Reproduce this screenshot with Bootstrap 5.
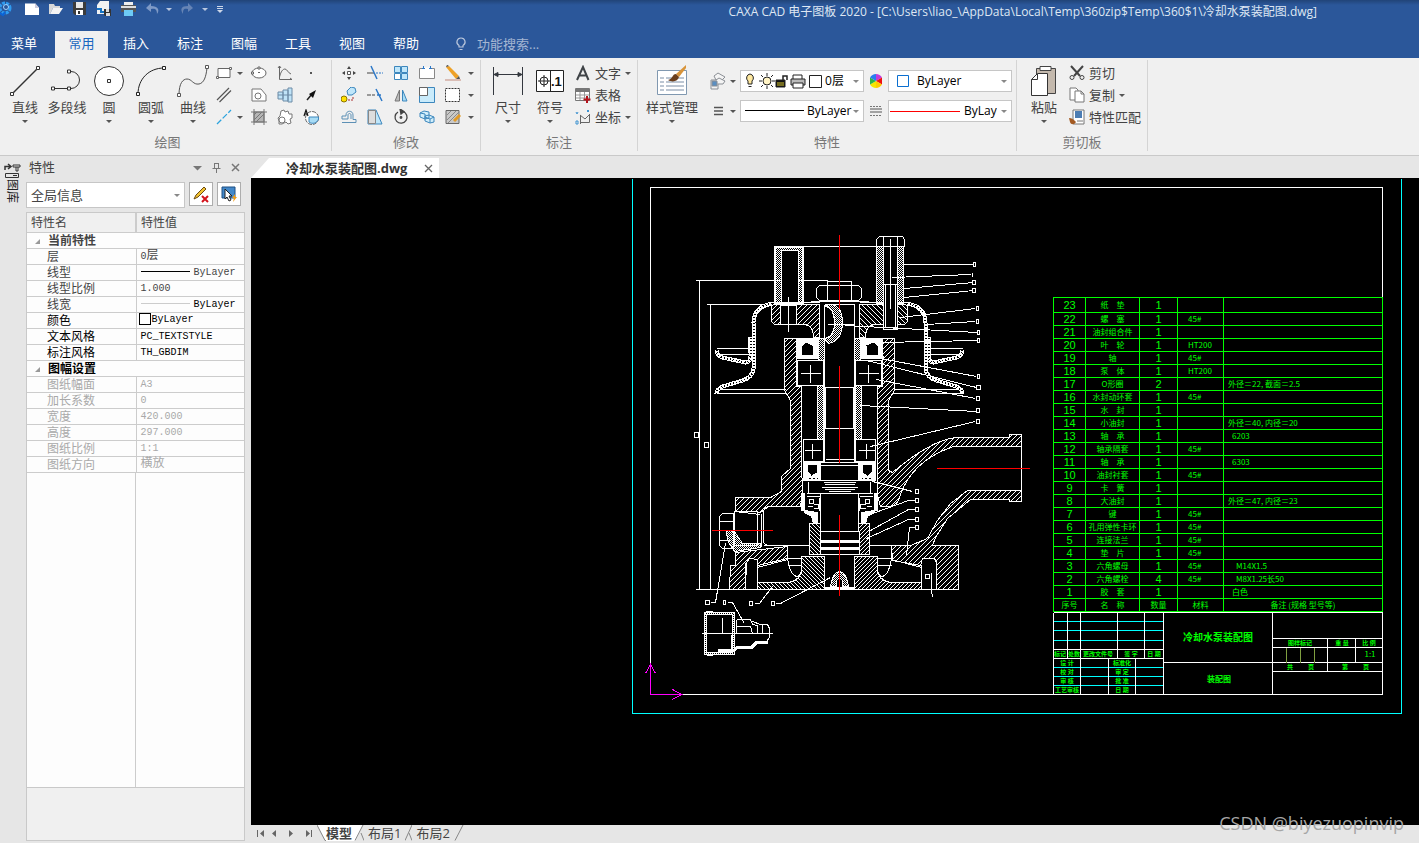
<!DOCTYPE html>
<html lang="zh-CN">
<head>
<meta charset="utf-8">
<meta name="viewport" content="width=device-width, initial-scale=1">
<title>CAXA CAD 电子图板 2020</title>
<link href="https://cdn.jsdelivr.net/npm/bootstrap@5.3.0/dist/css/bootstrap.min.css" rel="stylesheet">
<style>
:root{--blue:#2b579a;--face:#f0f0f0;--frame:#e6e6e6;--ink:#444}
body{font:13px/16px "Open Sans","Noto Sans CJK SC",sans-serif;color:var(--ink);background:var(--frame);overflow:hidden}
button,select,input{font:inherit;color:inherit}
button{border:0;background:none;padding:0}
svg{display:block;flex:none}
.arr{display:block;border:3px solid transparent;border-top-color:#555;border-bottom:0;width:6px;height:3px;flex:none}
/* title bar and menu */
.titlebar{background:linear-gradient(#214478,var(--blue) 5px);height:30px;color:#dfe7f3;font-size:12px}
.qat{height:18px}
.qat .arr{border-top-color:#b9c7df}
.caption{margin-right:102px}
.menubar{background:var(--blue);color:#fff;height:28px}
.menubar .nav-link{width:54px;height:27px;padding:0;line-height:24px;color:#fff;text-align:center;font-size:13px}
.menubar .nav-link.first{width:55px;padding-right:7px}
.menubar .nav-link.active{background:var(--face);color:#1a66c0;border-radius:0;height:27px;width:53px;margin-right:1px}
.finder{background:none;border:0;color:#fff;width:120px;padding:0;outline:0}
.finder::placeholder{color:#a5b6d3;opacity:1}
/* ribbon */
.ribbon{background:var(--face);border-bottom:1px solid #c9c9c9;padding:2px 0 4px;height:98px}
.rgroup{border-right:1px solid #d4d4d4;padding-top:2px}
.rgroup.wide{padding-left:6px;padding-right:6px}
.rgroup h2{font-size:13px;line-height:16px;margin:0;text-align:center;color:#777;font-weight:400}
.rbody{height:72px}
.big{width:42px;padding-top:3px;display:flex;flex-direction:column;align-items:center;gap:2px;white-space:nowrap}
.big.style-mgr{width:60px}
.big .arr{margin-top:3px}
.tools{display:grid;grid-auto-rows:22px;place-items:center;align-content:start}
.tools.draw{grid-template-columns:20px 12px 26px 26px 26px;margin-right:7px}
.tools.edit{grid-template-columns:repeat(5,26px) 10px}
.line-btn{height:22px;display:flex;align-items:center;gap:4px;white-space:nowrap}
.combo{display:flex;align-items:center;background:#fff;border:1px solid #c6c6c6;height:22px;width:124px;color:#000;font-size:12px;padding:0 4px;overflow:hidden}
.combo .arr{border-top-color:#888}
.combo select{appearance:none;border:0;background:none;padding:0;margin:0;min-width:0;outline:0}
.proprow{display:flex;align-items:center;gap:4px}
.mid-icon{width:24px;display:grid;place-items:center;margin:0 -4px}
/* panel */
.strip{width:26px;padding:6px 0 0 4px}
.strip span{writing-mode:vertical-rl;text-orientation:sideways;font-size:12px;line-height:16px;color:#222}
.panel{width:219px}
.panel-head{height:26px;padding:0 5px 4px 3px}
.panel .combo{width:159px;height:26px;font-size:13px;color:#444}
.tool-btn{width:24px;height:24px;background:#fff;border:1px solid #adadad;display:grid;place-items:center}
.sheet-grid{background:#fdfdfd;border:1px solid #c9c9c9}
.props{width:100%;table-layout:fixed;border-collapse:collapse;font:12px/15px "Noto Sans CJK SC",sans-serif;color:#444}
.props td,.props th{height:16px;padding:0 0 0 4px;border-bottom:1px solid #ccc;white-space:nowrap;font-weight:400;line-height:14px}
.props thead th{height:19px;background:var(--face);border-right:2px solid #ccc}
.props thead th:last-child{border-right:0}
.props td:first-child{padding-left:20px;width:109px;border-right:1px solid #ccc}
.props td+td{font-family:"Liberation Mono","Noto Sans CJK SC",monospace;font-size:12px;line-height:12px}
.props td+td i{font-style:normal;font-size:10px}
.props .head th{font-weight:700;text-align:left;padding-left:8px}
.props .dark td,.props .dark th{color:#000}
.props .off td{color:#a9a9a9}
.rule{display:inline-block;width:49px;height:1px;background:#000;vertical-align:middle;margin:0 4px 0 0}
.rule.pale{background:#ccc}
.swatch{display:inline-block;width:12px;height:12px;border:1px solid #000;background:#fff;vertical-align:middle;margin:0 1px 0 -2px}
.col-line{width:109px;border-right:1px solid #ccc}
.note-box{height:53px;background:var(--face);border:1px solid #c9c9c9;border-top:0;margin-bottom:2px}
/* document */
.doc{min-width:0;margin-left:6px}
.doc-tab{clip-path:polygon(0 100%,18px 0,100% 0,100% 100%);background:#fff;width:188px;height:20px;padding:0 6px 0 35px;font-weight:700;font-size:13px;color:#333}
.canvas{background:#000;overflow:hidden}
.drawing{position:relative;width:1168px}
.bom{position:absolute;left:802px;top:119px;width:330px;table-layout:fixed;border-collapse:collapse;border:1px solid #fff;color:#0f0;font:8px/11px "Noto Sans CJK SC",sans-serif}
.bom td,.bom th{height:13px;padding:0 0 1px 4px;border:1px solid #0f0;font-weight:400;white-space:nowrap;line-height:11px}
.bom tbody tr>:first-child,.bom tbody tr>:nth-child(3){font:11px/11px "Liberation Sans",sans-serif;text-align:center;padding:0}
.bom tr>:nth-child(2){text-align:center;padding:0 0 1px}
.bom tbody tr>:nth-child(4){padding-left:10px}
.bom tfoot tr>*{text-align:center;padding:0 0 1px}
.foot{height:18px;background:var(--frame)}
.layout-tab{height:16px;padding:0 4px;line-height:14px}
.wm{position:absolute;right:15px;bottom:9px;font:18px/22px "Open Sans",sans-serif;color:#a6a6a6;white-space:nowrap}
</style>
</head>
<body class="vh-100 d-flex flex-column position-relative">

<header class="titlebar d-flex align-items-start">
  <div class="qat d-flex align-items-center">
    <svg width="24" height="18" viewBox="0 0 24 18"><circle cx="5" cy="8" r="5" fill="none" stroke="#2f9bf0" stroke-width="3" stroke-dasharray="3 1"/><circle cx="6" cy="7" r="2.5" fill="none" stroke="#9fd4ff"/><path d="M0 13l3 2 2-3" stroke="#0b63d6" stroke-width="2" fill="none"/></svg>
    <svg width="24" height="18" viewBox="0 0 24 18"><path d="M1 3.500h10l4 4v7.500H1z" fill="#fff"/><path d="M11 3v5h4" fill="#ccd" /></svg>
    <svg width="24" height="18" viewBox="0 0 24 18"><path d="M1 4h5l1 2h5v2H5l-3 6H1z" fill="#d8d8d8"/><path d="M5 8h10l-4 6H2z" fill="#f4f4f4"/></svg>
    <svg width="24" height="18" viewBox="0 0 24 18"><path d="M1 2h13v13H3l-2-2z" fill="#3c3c3c"/><path d="M4 2h7v6H4z" fill="#e8e8e8"/><path d="M4 10h7v5H4z" fill="#fff"/><path d="M6 11h2v3H6z" fill="#333"/></svg>
    <svg width="24" height="18" viewBox="0 0 24 18"><path d="M4 1h9v13H1V5z" fill="#f2f2f2"/><path d="M1 9h4v3h3" stroke="#1674c4" stroke-width="2" fill="none"/><path d="M8 9h7v7H9l-1-1z" fill="#333"/><path d="M10 9h3v3h-3zM10 13h4v3h-4z" fill="#ddd"/></svg>
    <svg width="24" height="18" viewBox="0 0 24 18"><path d="M4 2h9v4H4z" fill="#eee"/><path d="M1 5h15v7H1z" fill="#555"/><path d="M1 6h15v2H1z" fill="#ddd"/><path d="M4 10h9v6H4z" fill="#6ecbf5"/></svg>
    <svg width="18" height="18" viewBox="0 0 18 18"><path d="M7 3L2 8l5 4V9c4-1 6 0 6 5 3-4 1-8-6-8z" fill="#7f9ac6"/></svg><span class="arr ms-1"></span>
    <svg class="ms-2" width="18" height="18" viewBox="0 0 18 18"><path d="M8 3l5 5-5 4V9C4 8 3 9 3 14c-3-5-2-8 5-8z" fill="#6684b5"/></svg><span class="arr ms-1"></span>
    <svg class="ms-2" width="8" height="18" viewBox="0 0 8 18"><path d="M1 6.500h6M1 8.500h6" stroke="#cdd7e8"/><path d="M1 10h6l-3 3z" fill="#cdd7e8"/></svg>
  </div>
  <div class="caption ms-auto pt-1">CAXA CAD 电子图板 2020 - [C:\Users\liao_\AppData\Local\Temp\360zip$Temp\360$1\冷却水泵装配图.dwg]</div>
</header>

<nav class="menubar nav flex-nowrap align-items-end">
  <a class="nav-link first" href="#">菜单</a><a class="nav-link active" href="#">常用</a><a class="nav-link" href="#">插入</a><a class="nav-link" href="#">标注</a><a class="nav-link" href="#">图幅</a><a class="nav-link" href="#">工具</a><a class="nav-link" href="#">视图</a><a class="nav-link" href="#">帮助</a>
  <label class="d-flex align-items-center h-100 ps-3" for="finder"><svg class="ms-1 me-2" width="16" height="16" viewBox="0 0 16 16"><path d="M8 2a4 4 0 0 0-2 7.500V11h4V9.500A4 4 0 0 0 8 2zM6.500 13.500h3" fill="none" stroke="#b9c6dc" stroke-width="1.200"/></svg></label>
  <input class="finder align-self-center" id="finder" type="text" placeholder="功能搜索..." aria-label="功能搜索">
</nav>

<section class="ribbon d-flex">
  <div class="rgroup ps-1">
    <div class="rbody d-flex">
      <button class="big"><svg width="32" height="32" viewBox="0 0 32 32" fill="none" stroke="#333"><path d="M3 29L29 3" stroke-width="1.500"/><path d="M1.500 27.500h3v3h-3zM27.500 1.500h3v3h-3z" fill="#fff"/></svg>直线<span class="arr"></span></button>
      <button class="big"><svg width="32" height="32" viewBox="0 0 32 32" fill="none" stroke="#333"><path d="M3 23.500h17a8 8 0 0 0 0-17h-1"/><path d="M.5 22h3v3h-3zM16.500 22h3v3h-3zM16.500 5h3v3h-3z" fill="#fff"/></svg>多段线</button>
      <button class="big"><svg width="32" height="32" viewBox="0 0 32 32" fill="#fff" stroke="#333"><circle cx="16" cy="16" r="14.500"/><path d="M14.500 14.500h3v3h-3z"/></svg>圆<span class="arr"></span></button>
      <button class="big"><svg width="32" height="32" viewBox="0 0 32 32" fill="none" stroke="#222"><path d="M3 29C3 14 14 3 29 3"/><path d="M1.500 27.500h3v3h-3zM27.500 1.500h3v3h-3z" fill="#fff"/></svg>圆弧<span class="arr"></span></button>
      <button class="big"><svg width="32" height="32" viewBox="0 0 32 32" fill="none" stroke="#555"><path d="M2 30C2 18 6 14 10 14c5 0 6 6 12 5 5-1 7-7 8-16"/><path d="M.5 28.500h3v3h-3zM28.500.5h3v3h-3z" fill="#fff"/></svg>曲线<span class="arr"></span></button>
      <div class="tools draw">
        <svg width="16" height="16" viewBox="0 0 16 16" fill="#fff" stroke="#666"><path d="M2 3.500h12v9H2z"/><path d="M.5 11.500h2v2h-2zM13.500 2.500h2v2h-2z"/></svg><span class="arr"></span>
        <svg width="16" height="16" viewBox="0 0 16 16" fill="#fff" stroke="#666"><ellipse cx="8" cy="8" rx="7" ry="5"/><path d="M.5 7h2v2h-2zM7 2h2v2H7zM7 7.500h2"/></svg>
        <svg width="16" height="16" viewBox="0 0 16 16" fill="none" stroke="#666"><path d="M2.500 1v13.500H15M2.500 12C4 6 6 4 8 4s3 4 6 5M1 3l1.500-2L4 3M13 13l2 1.500"/></svg>
        <svg width="16" height="16" viewBox="0 0 16 16"><path d="M7 7h2v2H7z" fill="#555"/></svg>
        <svg width="16" height="16" viewBox="0 0 16 16" stroke="#555" stroke-width="1.200"><path d="M1 13L13 1M3.500 15L15 3.500"/></svg><span></span>
        <svg width="16" height="16" viewBox="0 0 16 16" fill="#fff" stroke="#777"><path d="M1 2h9l5 6v6H1z"/><circle cx="7" cy="9" r="3"/></svg>
        <svg width="16" height="16" viewBox="0 0 16 16" fill="#bfe3f7" stroke="#6d8ba6"><path d="M1 5h5v7H1zM6 3h5v11H6zM11 1h4v14h-4zM1 8h14"/></svg>
        <svg width="16" height="16" viewBox="0 0 16 16"><path d="M4 13l5-6" stroke="#222" stroke-width="1.500"/><path d="M13 3L6 7l4 4z" fill="#111"/></svg>
        <svg width="16" height="16" viewBox="0 0 16 16" stroke="#2ba3de" stroke-width="1.300"><path d="M1 15L15 1" stroke-dasharray="6 2"/></svg><span class="arr"></span>
        <svg width="16" height="16" viewBox="0 0 16 16" fill="#b5b5b5" stroke="#777"><path d="M3 3h10v10H3z"/><path d="M3 0v16M13 0v16M0 3h16M0 13h16M3 6l3-3M3 11l8-8M5 13l8-8"/></svg>
        <svg width="16" height="16" viewBox="0 0 16 16" fill="#fff" stroke="#777"><path d="M4 2l3-1 1 2 3-1 1 3h3v4l-2 1 1 4-3 1-2-2-4 2H2v-3L1 9l2-2z"/><circle cx="5" cy="11" r="3"/></svg>
        <svg width="16" height="16" viewBox="0 0 16 16"><circle cx="9" cy="9" r="6.500" fill="#fff" stroke="#666" stroke-dasharray="4 1"/><path d="M6 8h9.500v2A6 6 0 0 1 6 13z" fill="#a8dcf5" stroke="#3c87bd"/><path d="M1 7l2-6 2 6M2 5h3" fill="none" stroke="#111" stroke-width="1.200"/></svg>
      </div>
    </div>
    <h2>绘图</h2>
  </div>

  <div class="rgroup ps-1 pe-1">
    <div class="rbody">
      <div class="tools edit">
        <svg width="16" height="16" viewBox="0 0 16 16" fill="#444"><path d="M8 1l2 3H6zM8 15l2-3H6zM1 8l3-2v4zM15 8l-3-2v4z"/><path d="M6.500 6.500h3v3h-3z" fill="#fff" stroke="#555"/></svg>
        <svg width="16" height="16" viewBox="0 0 16 16"><path d="M0 8h7" stroke="#444"/><path d="M9 8h7" stroke="#2c78c8" stroke-dasharray="2 1"/><path d="M4 1l6 13" stroke="#2c78c8" stroke-width="1.500"/></svg>
        <svg width="16" height="16" viewBox="0 0 16 16" fill="#bfe6fa" stroke="#3c87bd"><path d="M1.500 1.500h6v6h-6zM8.500 1.500h6v6h-6zM8.500 8.500h6v6h-6z"/><path d="M1.500 8.500h6v6h-6z" fill="#fff"/></svg>
        <svg width="16" height="16" viewBox="0 0 16 16" fill="#fff"><path d="M.5 3.500h15v10H.5z" stroke="#888"/><path d="M4 3.500h8" stroke="#fff" stroke-width="2"/><path d="M4.500 1v3M11.500 1v3M3 3.500h3M10 3.500h3" stroke="#2c78c8"/></svg>
        <svg width="16" height="16" viewBox="0 0 16 16"><path d="M1 2l3-1 10 10-3 3z" fill="#eea127"/><path d="M11 14l3-3 1 3z" fill="#555"/><path d="M1 2l3-1-2-1z" fill="#333"/><path d="M0 15h16" stroke="#c48a7a"/></svg><span class="arr"></span>
        <svg width="16" height="16" viewBox="0 0 16 16"><path d="M6 4l4-4 4 1 1 4-4 3-4 0z" fill="#bfe6fa" stroke="#3c87bd"/><circle cx="3" cy="12" r="3" fill="#ffe000" stroke="#8a7400"/><path d="M7 13h5V9" fill="none" stroke="#a33" stroke-dasharray="2 1"/></svg>
        <svg width="16" height="16" viewBox="0 0 16 16"><path d="M0 8h8" stroke="#444" stroke-dasharray="4 1"/><path d="M9 2l6 12M10 8h4" stroke="#2c78c8" stroke-width="1.500"/></svg>
        <svg width="16" height="16" viewBox="0 0 16 16"><path d="M6.500 3v11H2z" fill="#bbb" stroke="#777"/><path d="M9.500 3v11H14z" fill="#a8dcf5" stroke="#3c87bd"/></svg>
        <svg width="16" height="16" viewBox="0 0 16 16"><path d="M.5.5h15v15H.5z" fill="#c9ebfb" stroke="#3c87bd"/><path d="M.5.5h8v8h-8z" fill="#fff" stroke="#666"/></svg>
        <svg width="16" height="16" viewBox="0 0 16 16"><path d="M.5 1.500h14v13H.5z" fill="#fff" stroke="#333" stroke-dasharray="2 1"/></svg><span class="arr"></span>
        <svg width="16" height="16" viewBox="0 0 16 16" fill="none" stroke="#5d90b5"><path d="M1 13.500h14v-3h-3V6c0-5-7-5-7 0v1H1v3h6V6c0-2 3-2 3 0v4"/></svg>
        <svg width="16" height="16" viewBox="0 0 16 16"><path d="M1 1h8l6 14H1z" fill="#bfe6fa" stroke="#3c87bd"/><path d="M1.500 1.500h7v13h-7z" fill="#ddd" stroke="#888"/></svg>
        <svg width="16" height="16" viewBox="0 0 16 16" fill="none" stroke="#444" stroke-width="1.300"><path d="M10 2.500A6 6 0 1 1 5 3"/><path d="M7 0l4 2.500L8 5z" fill="#444"/><circle cx="8" cy="8.500" r=".8"/></svg>
        <svg width="16" height="16" viewBox="0 0 16 16" fill="#d3effb" stroke="#3c87bd"><path d="M1 4l4-2 5 1v6l-4 1-5-2zM6 7l4-1 5 2v5l-4 1-5-2zM1 4l5 1v5M6 8l5 2v4M11 10l4-2"/></svg>
        <svg width="16" height="16" viewBox="0 0 16 16"><path d="M1 1.500h13v13H1z" fill="#c9c9c9" stroke="#666"/><path d="M2 6l4-4M2 11l9-9M3 14L14 3" stroke="#888"/><path d="M9 12l6-6" stroke="#e09a28" stroke-width="3"/></svg><span class="arr"></span>
      </div>
    </div>
    <h2>修改</h2>
  </div>

  <div class="rgroup wide">
    <div class="rbody d-flex">
      <button class="big"><svg width="32" height="32" viewBox="0 0 32 32" fill="none" stroke="#34383f"><path d="M1.500 2v28M30.500 2v28M2 9.500h28"/><path d="M2 9.500l4-2v4zM30 9.500l-4-2v4z" fill="#34383f"/></svg>尺寸<span class="arr"></span></button>
      <button class="big me-1"><svg width="32" height="32" viewBox="0 0 32 32" fill="#fff" stroke="#222"><path d="M2.500 5.500h27v21h-27z"/><path d="M16.500 5v21M4 16h12M10 10v12" /><circle cx="10" cy="16" r="4" fill="none"/><text x="17" y="21" font-size="13" font-weight="700" fill="#111" stroke="none" font-family="Liberation Sans">.1</text></svg>符号<span class="arr"></span></button>
      <div>
        <button class="line-btn"><svg width="16" height="16" viewBox="0 0 16 16" fill="none" stroke="#3f4347" stroke-width="2"><path d="M2 15L8 2l5.500 13M4 10.500h8"/></svg>文字<span class="arr"></span></button>
        <button class="line-btn"><svg width="16" height="16" viewBox="0 0 16 16"><path d="M.5 1.500h14v12H.5z" fill="#fff" stroke="#777"/><path d="M1 2h13v3H1z" fill="#777"/><path d="M1 8h13M1 11h13M5 5v8M9.500 5v8" stroke="#999"/><path d="M12 9v7M8.500 12.500h7" stroke="#b4121b" stroke-width="2"/></svg>表格</button>
        <button class="line-btn"><svg width="16" height="16" viewBox="0 0 16 16" fill="none" stroke="#666"><path d="M5.500 15V6M5 13.500h9.500V6M5 6l5 4 5-5" /><path d="M1 3l1 2 1-2M12 1l2 2m0-2l-2 2M1 12h2v3H1z" stroke="#3f93d0"/></svg>坐标<span class="arr"></span></button>
      </div>
    </div>
    <h2>标注</h2>
  </div>

  <div class="rgroup ps-1 pe-1">
    <div class="rbody d-flex">
      <button class="big style-mgr"><svg width="32" height="32" viewBox="0 0 32 32"><path d="M1.500 5.500h29v24h-29z" fill="#fff" stroke="#8098b0"/><path d="M4 13h4M4 17h4M4 21h4M4 25h4M10 13h18M10 17h18M10 21h18M10 25h18" stroke="#7a8ea6"/><path d="M30 0L20 9l3 3 7-9z" fill="#d8943a"/><path d="M20 9c-4 0-3 5-8 6 5 3 10 1 11-3z" fill="#6b3f1d"/></svg>样式管理<span class="arr"></span></button>
      <div class="d-flex flex-column gap-2 ps-2 pt-2">
        <div class="proprow">
          <button class="d-flex align-items-center gap-1"><svg width="16" height="22" viewBox="0 0 16 22" fill="#f4f4f4" stroke="#8b8f95"><path d="M1 10h7v9H1zM4 6l4-3 7 4-3 3H6z"/><path d="M6 10l3-2 6 3-2 3H8"/><path d="M2 11h5v5H2z" fill="#5b8fc2"/></svg><span class="arr"></span></button>
          <div class="combo">
            <svg width="80" height="20" viewBox="0 0 80 20" fill="none" stroke="#222"><path d="M5 3a4 4 0 0 0-2 7v3h4v-3a4 4 0 0 0-2-7zM3.500 15.500h3" fill="#ffe9a0"/><circle cx="22" cy="10" r="4" fill="#fff3c4"/><path d="M22 2v3M22 15v3M14 10h3M27 10h3M16 4l2 2M28 4l-2 2M16 16l2-2M28 16l-2-2"/><path d="M31 9h9v7h-9z" fill="#111"/><path d="M32 12h7M32 14h7" stroke="#dc3"/><path d="M38 9V5h4v4" stroke-width="1.500"/><path d="M48 4h9v5h-9z" fill="#fff"/><path d="M46 8h14v6H46z" fill="#bbb"/><path d="M48 12h10v5H48z" fill="#fff"/><path d="M64.500 4.500h12v12h-12z" fill="#fff"/></svg>
            <select class="flex-fill" aria-label="图层"><option>0层</option></select><span class="arr"></span>
          </div>
          <span class="mid-icon"><svg width="14" height="14" viewBox="0 0 14 14"><path d="M7 7V0A7 7 0 0 1 13 3.500z" fill="#c33bd8"/><path d="M7 7l6-3.500v7z" fill="#e11"/><path d="M7 7l6 3.500A7 7 0 0 1 7 14z" fill="#fc0"/><path d="M7 7v7a7 7 0 0 1-6-3.500z" fill="#f5e600"/><path d="M7 7l-6 3.500v-7z" fill="#2bb34a"/><path d="M7 7L1 3.500A7 7 0 0 1 7 0z" fill="#2a7cf0"/></svg></span>
          <div class="combo">
            <svg class="ms-1 me-2" width="12" height="12" viewBox="0 0 12 12"><path d="M.5.5h11v11H.5z" fill="#fff" stroke="#0a6fd0"/></svg>
            <select class="flex-fill" aria-label="颜色"><option>ByLayer</option></select><span class="arr"></span>
          </div>
        </div>
        <div class="proprow">
          <button class="d-flex align-items-center gap-1"><svg width="16" height="22" viewBox="0 0 16 22"><path d="M4 7.500h9M4 11h9M4 14.500h9" stroke="#555" stroke-width="1.500"/></svg><span class="arr"></span></button>
          <div class="combo">
            <svg width="62" height="20" viewBox="0 0 62 20"><path d="M0 9.500h59" stroke="#000"/></svg>
            <select class="flex-fill" aria-label="线型"><option>ByLayer</option></select><span class="arr"></span>
          </div>
          <span class="mid-icon"><svg width="14" height="14" viewBox="0 0 14 14"><path d="M1 2.500h12M1 11.500h12" stroke="#777" stroke-dasharray="2 1"/><path d="M1 5h12M1 8h12" stroke="#555"/></svg></span>
          <div class="combo ps-0">
            <svg width="75" height="20" viewBox="0 0 75 20"><path d="M1 10.500h70" stroke="#f00" shape-rendering="crispEdges"/></svg>
            <select class="flex-fill" aria-label="线宽"><option>ByLayer</option></select><span class="arr ms-1"></span>
          </div>
        </div>
      </div>
    </div>
    <h2>特性</h2>
  </div>

  <div class="rgroup wide">
    <div class="rbody d-flex">
      <button class="big me-1"><svg width="32" height="32" viewBox="0 0 32 32"><path d="M8.500 3.500h19v25h-19z" fill="#c4b9ad" stroke="#444"/><path d="M12 1.500h11v4H12z" fill="#fff" stroke="#444"/><path d="M3.500 14.500l6-6h10v22h-16z" fill="#fff" stroke="#333"/><path d="M3.500 14.500h6V9" fill="none" stroke="#333"/></svg>粘贴<span class="arr"></span></button>
      <div>
        <button class="line-btn"><svg width="16" height="16" viewBox="0 0 16 16" fill="none" stroke="#444"><path d="M2 1l9 10M14 1L5 11" stroke-width="2"/><circle cx="3" cy="12.500" r="2"/><circle cx="13" cy="12.500" r="2"/></svg>剪切</button>
        <button class="line-btn"><svg width="16" height="16" viewBox="0 0 16 16" fill="#fff" stroke="#777"><path d="M1 1h6l2 2v10H1z"/><path d="M6 4h6l3 3v8H6z"/><path d="M12 4v3h3" fill="none"/></svg>复制<span class="arr"></span></button>
        <button class="line-btn"><svg width="16" height="16" viewBox="0 0 16 16"><path d="M4 1h11v14H4z" fill="#fff" stroke="#777"/><path d="M6 2h7v7H6z" fill="#4c7db3"/><path d="M8 12h6" stroke="#777"/><path d="M0 9c3 0 5 2 7 4-2 3-5 3-6 0z" fill="#a35a22"/></svg>特性匹配</button>
      </div>
    </div>
    <h2>剪切板</h2>
  </div>
</section>

<main class="flex-fill d-flex" style="min-height:0">
  <aside class="strip d-flex flex-column align-items-start">
    <svg width="17" height="17" viewBox="0 0 17 17" fill="none" stroke="#333"><path d="M1 8V4.500h5M4 2l3 2.500L4 7" stroke-width="1.500"/><path d="M9 3h7v2H9zM12 5v4h2V5M1.500 11.500h13v4h-13zM9 13.500h4"/></svg>
    <span>图库</span>
  </aside>

  <aside class="panel d-flex flex-column">
    <div class="panel-head d-flex align-items-center"><span class="me-auto">特性</span>
      <svg width="48" height="16" viewBox="0 0 48 16"><path d="M1 7h9L5.500 11.500z" fill="#777"/><path d="M22 4.500h5M22.500 4v5M26.500 4v5M20.500 9.500h8M24.500 9v5" stroke="#777" fill="none"/><path d="M40 5l7 7M47 5l-7 7" stroke="#777" stroke-width="1.500"/></svg>
    </div>
    <div class="d-flex gap-1 mb-1">
      <div class="combo"><select class="flex-fill" aria-label="选择对象"><option>全局信息</option></select><span class="arr"></span></div>
      <button class="tool-btn" aria-label="清除选择"><svg width="18" height="18" viewBox="0 0 18 18"><path d="M2 14l2-4 8-8 2 2-8 8z" fill="#f1c232" stroke="#6b4a12"/><path d="M10 11l6 6M16 11l-6 6" stroke="#d3121b" stroke-width="2"/></svg></button>
      <button class="tool-btn" aria-label="快速选择"><svg width="18" height="18" viewBox="0 0 18 18"><path d="M2 2h13v11H2z" fill="#4388c9" stroke="#1d4f83"/><path d="M5 4l7 7H9l2 4-2 1-2-4-2 2z" fill="#fff" stroke="#222"/><path d="M15 9l-3 4h2l-1 4 4-5h-2z" fill="#f39c12"/></svg></button>
    </div>
    <div class="sheet-grid flex-fill d-flex flex-column">
      <table class="props">
        <colgroup><col style="width:109px"><col></colgroup>
        <thead><tr><th>特性名</th><th>特性值</th></tr></thead>
        <tbody>
        <tr class="head"><th colspan="2"><svg class="d-inline-block me-2" width="5" height="5" viewBox="0 0 5 5"><path d="M5 0v5H0z" fill="#999"/></svg>当前特性</th></tr>
        <tr><td>层</td><td><i>0</i>层</td></tr>
        <tr><td>线型</td><td><span class="rule"></span><i>ByLayer</i></td></tr>
        <tr><td>线型比例</td><td><i>1.000</i></td></tr>
        <tr><td>线宽</td><td class="text-black"><span class="rule pale"></span><i>ByLayer</i></td></tr>
        <tr class="dark"><td>颜色</td><td><span class="swatch"></span><i>ByLayer</i></td></tr>
        <tr class="dark"><td>文本风格</td><td><i>PC_TEXTSTYLE</i></td></tr>
        <tr class="dark"><td>标注风格</td><td><i>TH_GBDIM</i></td></tr>
        <tr class="head dark"><th colspan="2"><svg class="d-inline-block me-2" width="5" height="5" viewBox="0 0 5 5"><path d="M5 0v5H0z" fill="#999"/></svg>图幅设置</th></tr>
        <tr class="off"><td>图纸幅面</td><td><i>A3</i></td></tr>
        <tr class="off"><td>加长系数</td><td><i>0</i></td></tr>
        <tr class="off"><td>宽度</td><td><i>420.000</i></td></tr>
        <tr class="off"><td>高度</td><td><i>297.000</i></td></tr>
        <tr class="off"><td>图纸比例</td><td><i>1:1</i></td></tr>
        <tr class="off"><td>图纸方向</td><td>横放</td></tr>
        </tbody>
      </table>
      <div class="col-line flex-fill"></div>
    </div>
    <div class="note-box"></div>
  </aside>

  <section class="doc flex-fill d-flex flex-column">
    <div class="d-flex align-items-end" style="height:22px">
      <div class="doc-tab d-flex align-items-center justify-content-between">冷却水泵装配图.dwg<svg width="9" height="9" viewBox="0 0 9 9"><path d="M1 1l7 7M8 1L1 8" stroke="#666" stroke-width="1.300"/></svg></div>
    </div>

    <div class="canvas flex-fill" style="min-height:0">
    <div class="drawing">
      <svg width="1168" height="647" viewBox="251 178 1168 647">
        <defs>
          <pattern id="hA" width="5" height="5" patternUnits="userSpaceOnUse" patternTransform="translate(.5 .5)"><path d="M0 4h1v1H0zM1 3h1v1H1zM2 2h1v1H2zM3 1h1v1H3zM4 0h1v1H4z" fill="#fff" stroke="none"/></pattern>
          <pattern id="hB" width="4" height="4" patternUnits="userSpaceOnUse" patternTransform="translate(.5 .5)"><path d="M0 0h1v1H0zM1 1h1v1H1zM2 2h1v1H2zM3 3h1v1H3z" fill="#fff" stroke="none"/></pattern>
          <pattern id="hD" width="2" height="2" patternUnits="userSpaceOnUse" patternTransform="translate(.5 .5)"><path d="M0 0h1v1H0zM1 1h1v1H1z" fill="#fff" stroke="none"/></pattern>
          <g id="half">
            <path d="M771 304H819V337H813Q813 325 804 324H774L771 321Z" fill="url(#hA)"/>
            <path d="M772 303Q753 306 753 322V368Q752 377 742 380L722 386Q716 389 716 393M716 349Q716 355 722 357L745 362Q750 362 750 355V336" stroke-width="4"/>
            <path d="M772 303Q753 306 753 322V368Q752 377 742 380L722 386Q716 389 716 393M716 349Q716 355 722 357L745 362Q750 362 750 355V336" stroke="#000" stroke-width="2" stroke-dasharray="1 2"/>
            <path d="M716 348H749M719 354H748M748 336V352M720 389H785M716 393H786M768 302H819"/>
            <path d="M797 360H823V385H797ZM800 373H820M810 364V382M824 304V462M825 387V428"/>
            <path d="M818 338H824V360H818ZM817 385H823V439H817Z" fill="url(#hD)" stroke-width="1"/>
            <path d="M796 338H818V355H796Z" fill="#fff"/><path d="M801 346L805 342L812 345V354H801Z" fill="#000" stroke="none"/><path d="M795 357H818" stroke-width="3"/>
            <path d="M803 439H823V461H803ZM804 450H820M812 443V458"/>
            <path d="M803 461H820V480H803Z" fill="#fff"/><path d="M807 464H816V472L811 475L807 471Z" fill="#000" stroke="none"/><path d="M808 478H817" stroke="#000" stroke-dasharray="2 2"/>
            <path d="M808 481V492"/>
            <path d="M801 493H804V510H801ZM806 493H820M806 496H819M817 512V523H813L811 516L804 512V510Z" fill="#fff"/>
            <path d="M809 499h4v4h-4zM813 504h5v4h-5M807 506h5M819 497V510"/>
            <path d="M809 523H820V554H809Z" fill="url(#hB)"/>
            <path d="M824 556H801V572Q797 582 785 582H757V589H824Z" fill="url(#hB)"/>
            <path d="M787 558Q790 576 797 576Q801 575 801 568M787 558V545M787 558H801M757 567L787 559M757 564V582M787 565H801"/>
          </g>
        </defs>
        <g transform="translate(.5 .5)" fill="none" stroke="#fff" shape-rendering="crispEdges">
          <path d="M632 178V713H1401V178" stroke="#00ffff"/>
          <path d="M650 187H1382V694H650Z"/>
          <path d="M650 694V664M645 673L650 664L655 673M650 694H681M672 689L681 694L672 699" stroke="#f0f"/>

          <path d="M699 280V589M710 304V589M695 280H827M706 304H772M695 589H728M694 432h4v5h-4zM704 442h4v5h-4z"/>
          <!-- housing walls -->
          <path d="M784 338H796V386H801V461L802 493L800 506H768L760 512H735V497H770L781 491V476L790 468V400L784 390Z" fill="url(#hA)"/>
          <path d="M894 338H882V386H877V495L880 506H890Q898 504 900 494Q912 460 953 446H1021V434H1009V437H955Q930 440 892 472L888 470V400L894 390Z" fill="url(#hA)"/>
          <path d="M891 545H910L927 538L937 520L950 503L967 490H1021V501H1009V499H970L947 518L935 537L932 545H958V589H936V562L934 558H922L920 565L892 560Z" fill="url(#hA)"/>
          <path d="M735 552L787 546V558L757 565V559L749 558L746 562L745 589H729L730 565H735Z" fill="url(#hA)"/>
          <path d="M1021 434V501M728 589H958M936 589V562M745 589V562M763 545H809M869 545H891M768 506Q763 507 763 512V540Q763 545 770 545"/>
          <use href="#half"/><use href="#half" transform="translate(1678 0) scale(-1 1)"/>

          <!-- left stud, nut and shaft -->
          <path d="M774 246H802V302H774Z" fill="url(#hD)" stroke-width="2"/><path d="M781 250H798V302H781Z" fill="#000"/>
          <path d="M780 305H796V324H780Z" fill="#000"/><path d="M788 296V331M774 246H877"/>
          <path d="M827 281H851V285H827ZM819 285H858L861 288V297L858 300H819L816 297V288ZM827 285V300M851 285V300M810 301H868M824 304H854" fill="#000"/>
          <path d="M824 305Q834 308 834 322Q834 336 824 338L828 343Q842 340 842 322Q842 307 832 304Z" fill="url(#hD)"/>
          <path d="M827 324H854M824 387H854M824 428H854M825 459H853M820 462H858M820 465H858V480H820ZM823 482H855M824 484H854M821 487H857M824 489H854M828 491H850"/>
          <path d="M820 493H858V531H820ZM820 531V554H859V531M824 556V589M854 556V589M823 554H855" fill="#000"/>
          <path d="M820 541H859M820 548H859" stroke-width="3"/><path d="M824 588H854" stroke-width="3"/>
          <path d="M830 586Q832 572 839 571Q846 572 848 586Z" fill="url(#hD)"/><path d="M836 586V580L839 577L842 580V586" fill="#000"/>
          <!-- right bolt -->
          <path d="M876 246H903V303H876Z" fill="url(#hD)"/><path d="M883 246H897V329H883Z" fill="#000"/>
          <path d="M876 246V239L879 236H902L904 239V246ZM883 236V246M897 236V246M890 238V308M885 284V327M895 284V327M883 284H897M883 327H897"/>
          <!-- side plug -->
          <path d="M733 513H722L719 516V545L722 548H733ZM719 521H733M719 540H730M734 511H757V545H734ZM734 511L760 514M761 513V546" fill="#000"/>
          <path d="M726 530L734 531L742 543H760V547L734 551L727 540Z" fill="url(#hD)"/>
          <!-- switch detail -->
          <path d="M705 613H733V653H705Z" stroke-width="3"/><path d="M705 613H733V653H705Z" stroke="#000" stroke-dasharray="1 1"/>
          <path d="M705 611H712M706 655H712M701 633H772M722 617V633M731 634V649M736 619H750L752 624L757 625V633M736 619V633M736 626H750L752 633M752 621L760 624H767L769 628V637L766 641H757L752 646H735M762 624V633"/>
          <path d="M717 650H733L737 647H751L756 642H767" stroke-width="3"/>

          <path d="M839 234V308M839 365V462M839 514V595M936 468H1029M711 530H772" stroke="#f00"/>
          <path d="M903 264H972M892 277L971 274M904 288L973 282M904 297L973 290M900 317L975 308M926 324L975 321M845 325L977 332M880 342L977 340M880 358L976 376M866 360L976 387M876 379L975 398M860 405L976 411M870 446L975 421"/>
          <path d="M973 262h2v4h-2zM972 272v4M972 280h3v4h-3zM972 288h3v4h-3zM976 306h2v4h-2zM976 319h2v4h-2zM977 330h2v4h-2zM977 338h2v4h-2zM977 374h2v4h-2zM976 385h4v4h-4zM976 396h3v4h-3zM976 408h3v4h-3zM976 419h3v4h-3z"/>
          <path d="M872 481L912 491M875 512L908 500H914M870 530L908 509H914M866 538L908 519H914M906 555L909 527H914M915 489h3v4h-3zM915 498h3v4h-3zM915 507h3v4h-3zM915 517h3v4h-3zM915 525h3v4h-3z"/>
          <path d="M725 543L715 602H710M744 623L732 602H727M772 586L759 603H754M830 577L780 603H775M705 600h4v4h-4zM723 600h2v4h-2zM749 601h3v4h-3zM771 601h3v4h-3zM925 574h4v4h-4zM931 572V590L932 597"/>

          <!-- title block -->
          <path d="M1053 621H1163M1053 630H1163M1053 640H1163M1053 667H1163M1053 676H1163M1053 685H1163" stroke="#00ffff"/>
          <path d="M1053 612H1382M1053 612V694M1067 612V658M1080 612V694M1117 612V658M1144 612V658M1108 658V694M1135 658V694M1053 649H1163M1053 658H1163M1163 612V694M1272 612V694M1163 662H1382M1272 638H1382M1272 647H1382M1272 671H1382M1327 638V671M1355 638V662"/>
          <path d="M1286 647V662M1300 647V662M1314 647V662" stroke="#7f9f40"/>
        </g>
        <g fill="#0f0" font-family="Noto Sans CJK SC, sans-serif" font-size="6" font-weight="700" text-anchor="middle">
          <text x="1218" y="641" font-size="10">冷却水泵装配图</text><text x="1219" y="682" font-size="8">装配图</text>
          <text x="1060" y="656">标记</text><text x="1074" y="656">处数</text><text x="1098" y="656">更改文件号</text><text x="1131" y="656">签 字</text><text x="1154" y="656">日 期</text>
          <text x="1067" y="665">设 计</text><text x="1122" y="665">标准化</text><text x="1067" y="674">校 对</text><text x="1122" y="674">审 定</text><text x="1067" y="683">审 核</text><text x="1122" y="683">批 准</text><text x="1067" y="692">工艺审核</text><text x="1122" y="692">日 期</text>
          <text x="1300" y="645">图样标记</text><text x="1342" y="645">重 量</text><text x="1369" y="645">比 例</text><text x="1370" y="657" font-size="8" font-weight="400">1:1</text>
          <text x="1290" y="669">共</text><text x="1311" y="669">页</text><text x="1345" y="669">第</text><text x="1366" y="669">页</text>
        </g>
      </svg>
      <table class="bom">
        <colgroup><col style="width:32px"><col style="width:54px"><col style="width:38px"><col style="width:46px"><col></colgroup>
        <tbody>
        <tr style="height:15px"><td>23<td>纸　垫<td>1<td><td></tr>
        <tr><td>22<td>螺　塞<td>1<td>45#<td></tr>
        <tr><td>21<td>油封组合件<td>1<td><td></tr>
        <tr><td>20<td>叶　轮<td>1<td>HT200<td></tr>
        <tr><td>19<td>轴<td>1<td>45#<td></tr>
        <tr><td>18<td>泵　体<td>1<td>HT200<td></tr>
        <tr><td>17<td>O形圈<td>2<td><td>外径＝22, 截面＝2.5</tr>
        <tr><td>16<td>水封动环套<td>1<td>45#<td></tr>
        <tr><td>15<td>水　封<td>1<td><td></tr>
        <tr><td>14<td>小油封<td>1<td><td>外径＝40, 内径＝20</tr>
        <tr><td>13<td>轴　承<td>1<td><td>&ensp;6203</tr>
        <tr><td>12<td>轴承隔套<td>1<td>45#<td></tr>
        <tr><td>11<td>轴　承<td>1<td><td>&ensp;6303</tr>
        <tr><td>10<td>油封衬套<td>1<td>45#<td></tr>
        <tr><td>9<td>卡　簧<td>1<td><td></tr>
        <tr><td>8<td>大油封<td>1<td><td>外径＝47, 内径＝23</tr>
        <tr><td>7<td>键<td>1<td>45#<td></tr>
        <tr><td>6<td>孔用弹性卡环<td>1<td>45#<td></tr>
        <tr><td>5<td>连接法兰<td>1<td>45#<td></tr>
        <tr><td>4<td>垫　片<td>1<td>45#<td></tr>
        <tr><td>3<td>六角螺母<td>1<td>45#<td>&emsp;M14X1.5</tr>
        <tr><td>2<td>六角螺栓<td>4<td>45#<td>&emsp;M8X1.25长50</tr>
        <tr><td>1<td>胶　套<td>1<td><td>&ensp;白色</tr>
        </tbody>
        <tfoot><tr><th>序号<th>名　称<th>数量<th>材料<th>备注 (规格 型号等)</tr></tfoot>
      </table>
    </div>
    </div>

    <nav class="foot d-flex align-items-start">
      <svg width="66" height="16" viewBox="0 0 66 16" fill="#666"><path d="M6 5h1v7H6zM13 5v7L9 8.500zM25 5v7l-4-3.500zM38 5l4 3.500-4 3.500zM55 5l4 3.500-4 3.500zM60 5h1v7h-1z"/></svg>
      <svg width="9" height="16" viewBox="0 0 9 16"><path d="M0 0h9v16z" fill="#fff"/><path d="M0 0l8 15.500h1" stroke="#888" fill="none"/></svg>
      <button class="layout-tab bg-white fw-bold px-0">模型</button>
      <svg width="12" height="16" viewBox="0 0 12 16"><path d="M0 0h11L3 16H0z" fill="#fff"/><path d="M11 0L3 15.500M9 8l3 7.500" stroke="#888" fill="none"/></svg>
      <button class="layout-tab">布局1</button>
      <svg width="7" height="16" viewBox="0 0 7 16"><path d="M7 0L0 15.500M4 8l3 7.500" stroke="#888" fill="none"/></svg>
      <button class="layout-tab">布局2</button>
      <svg width="10" height="16" viewBox="0 0 10 16"><path d="M9 0L1 15.500" stroke="#888" fill="none"/></svg>
    </nav>
  </section>
</main>
<div class="wm">CSDN @biyezuopinvip</div>
<script src="https://cdn.jsdelivr.net/npm/bootstrap@5.3.0/dist/js/bootstrap.bundle.min.js"></script>
</body>
</html>
